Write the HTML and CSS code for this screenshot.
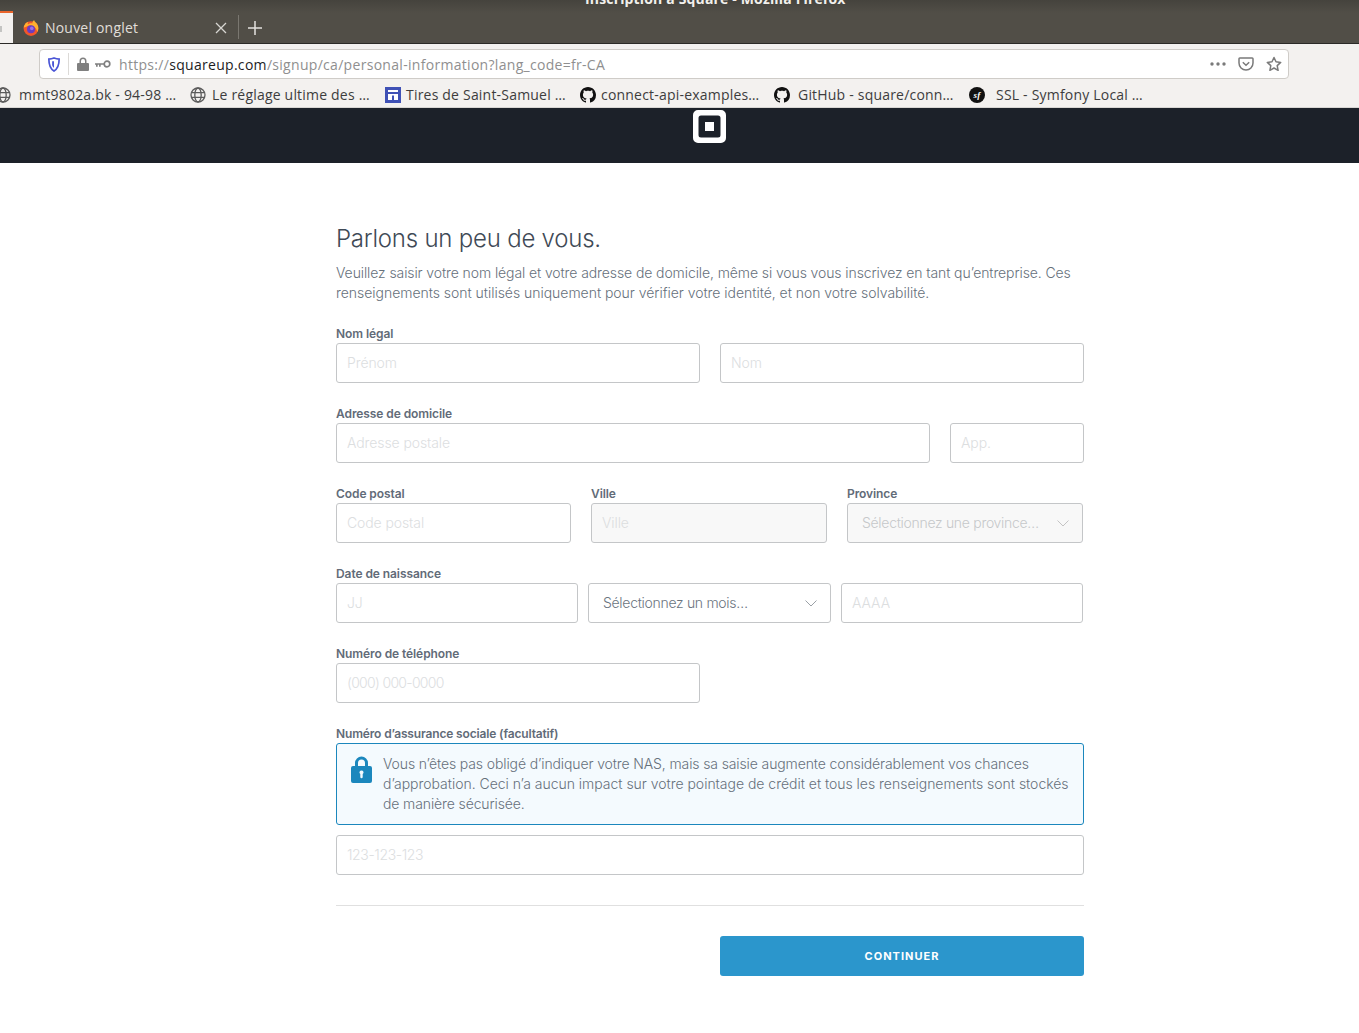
FILE: index.html
```html
<!DOCTYPE html>
<html lang="fr-CA">
<head>
<meta charset="utf-8">
<title>Inscription à Square - Mozilla Firefox</title>
<link rel="stylesheet" href="styles.css">
</head>
<body>
<div class="browser">
  <div class="tabstrip">
    <div class="wintitle">Inscription à Square - Mozilla Firefox</div>
    <div class="tab-stub"><span class="stub-x"></span></div>
    <div class="tab">
      <svg class="favicon" viewBox="0 0 16 16" width="16" height="16"><circle cx="8" cy="8.600" r="7.400" fill="#f2562b"/><path d="M.7 7.500C1.200 4.500 3 2.500 5.200 1.800 4.500 3 4.600 3.800 5 4.500 6 3.200 8 3 9.500 3.300 9.200 2 10 .8 11.200 0c0 1.300 1 2 2 3 1.300 1.300 2.100 3.200 2.100 5.200 0 1.300-.4 2.600-1.100 3.700-.4-3-2-5-5-6-2-.7-4-.4-5.500.6-1.200.6-2.200 1-3 1z" fill="#ffb02e"/><circle cx="8" cy="9.200" r="4" fill="#6a3cc2"/><circle cx="8.800" cy="8.400" r="1.800" fill="#9a74e6"/></svg>
      <span class="tab-label">Nouvel onglet</span>
      <svg class="tab-close" viewBox="0 0 12 12" width="12" height="12"><path d="M1 1l10 10M11 1L1 11" stroke="#d8d6d2" stroke-width="1.300" fill="none"/></svg>
    </div>
    <span class="tab-sep"></span>
    <svg class="tab-new" viewBox="0 0 14 14" width="14" height="14"><path d="M7 0v14M0 7h14" stroke="#e4e2df" stroke-width="1.500" fill="none"/></svg>
  </div>
  <div class="navbar">
    <div class="urlbar">
      <svg class="ico-shield" viewBox="0 0 14 16" width="14" height="15"><path d="M1.500 2.200C3.500 2 5.500 1.500 7 1c1.500.5 3.500 1 5.500 1.200 0 5.500-.8 10-5.500 12.800C2.300 12.200 1.500 7.700 1.500 2.200z" fill="#fff" stroke="#4a55d6" stroke-width="1.800"/><path d="M7 4.500h-2v3.500c0 1.500.9 2.800 2 3.500z" fill="#4a55d6"/></svg>
      <span class="url-sep"></span>
      <svg class="ico-lock" viewBox="0 0 12 14" width="12" height="14"><path d="M2.500 6V4a3.500 3.500 0 017 0v2h1.500a1 1 0 011 1v6a1 1 0 01-1 1H1a1 1 0 01-1-1V7a1 1 0 011-1zM4 6h4V4a2 2 0 00-4 0z" fill="#808080"/></svg>
      <svg class="ico-key" viewBox="0 0 16 8" width="16" height="8"><circle cx="12" cy="4" r="2.800" fill="none" stroke="#808080" stroke-width="1.700"/><path d="M9 3.200H0v1.600h1v2h1.700v-2h1.300v2h1.700v-2H9z" fill="#808080"/></svg>
      <div class="url"><span class="dim">https://</span><span class="host">squareup.com</span><span class="dim">/signup/ca/personal-information?lang_code=fr-CA</span></div>
      <svg class="ico-dots" viewBox="0 0 16 4" width="16" height="4"><circle cx="2" cy="2" r="1.700" fill="#7a7a7a"/><circle cx="8" cy="2" r="1.700" fill="#7a7a7a"/><circle cx="14" cy="2" r="1.700" fill="#7a7a7a"/></svg>
      <svg class="ico-pocket" viewBox="0 0 16 14" width="16" height="14"><path d="M1.800 1h12.400a.8.800 0 01.8.8V6a7 7 0 01-14 0V1.800a.8.800 0 01.8-.8z" fill="none" stroke="#7a7a7a" stroke-width="1.500"/><path d="M4.800 5.200L8 8.200l3.200-3" fill="none" stroke="#7a7a7a" stroke-width="1.500"/></svg>
      <svg class="ico-star" viewBox="0 0 16 16" width="16" height="16"><path d="M8 1.500l2 4.300 4.700.6-3.500 3.200.9 4.700L8 12l-4.100 2.300.9-4.700-3.500-3.200 4.700-.6z" fill="none" stroke="#7a7a7a" stroke-width="1.500" stroke-linejoin="round"/></svg>
    </div>
  </div>
  <div class="bookmarks">
    <div class="bm bm-1">
      <svg class="globe" viewBox="0 0 16 16" width="16" height="16"><g fill="none" stroke="#5c5c5c" stroke-width="1.300"><circle cx="8" cy="8" r="7"/><ellipse cx="8" cy="8" rx="3.200" ry="7"/><path d="M1.200 5.600h13.600M1.200 10.400h13.600"/></g></svg>
      <span class="bm-text">mmt9802a.bk - 94-98 …</span>
    </div>
    <div class="bm bm-2">
      <svg class="globe" viewBox="0 0 16 16" width="16" height="16"><g fill="none" stroke="#5c5c5c" stroke-width="1.300"><circle cx="8" cy="8" r="7"/><ellipse cx="8" cy="8" rx="3.200" ry="7"/><path d="M1.200 5.600h13.600M1.200 10.400h13.600"/></g></svg>
      <span class="bm-text">Le réglage ultime des …</span>
    </div>
    <div class="bm bm-3">
      <svg viewBox="0 0 16 16" width="16" height="16"><rect width="16" height="16" fill="#3f51b5"/><path d="M3 3h10v2H3zM3 7h10v1.500H3zM3 8.500h4V13H3zM9 8.500h4V13H9z" fill="#fff"/></svg>
      <span class="bm-text">Tires de Saint-Samuel …</span>
    </div>
    <div class="bm bm-4">
      <svg viewBox="0 0 16 16" width="16" height="16"><path fill="#111" d="M8 0C3.580 0 0 3.580 0 8c0 3.540 2.290 6.530 5.470 7.590.4.070.55-.17.55-.38 0-.19-.01-.82-.01-1.490-2.010.37-2.530-.49-2.690-.94-.09-.23-.48-.94-.82-1.130-.28-.15-.68-.52-.01-.53.63-.01 1.080.58 1.230.82.720 1.210 1.870.87 2.330.66.070-.52.280-.87.510-1.070-1.780-.2-3.640-.89-3.640-3.950 0-.87.310-1.590.820-2.150-.08-.2-.36-1.020.080-2.120 0 0 .67-.21 2.200.82.640-.18 1.320-.27 2-.27.680 0 1.360.090 2 .27 1.530-1.040 2.200-.82 2.200-.82.440 1.100.160 1.920.080 2.120.510.560.820 1.270.820 2.150 0 3.070-1.870 3.750-3.650 3.950.290.250.540.730.540 1.480 0 1.070-.01 1.930-.01 2.200 0 .210.150.460.550.380A8.013 8.013 0 0016 8c0-4.420-3.580-8-8-8z"/></svg>
      <span class="bm-text">connect-api-examples…</span>
    </div>
    <div class="bm bm-5">
      <svg viewBox="0 0 16 16" width="16" height="16"><path fill="#111" d="M8 0C3.580 0 0 3.580 0 8c0 3.540 2.290 6.530 5.470 7.590.4.070.55-.17.55-.38 0-.19-.01-.82-.01-1.490-2.010.37-2.530-.49-2.690-.94-.09-.23-.48-.94-.82-1.130-.28-.15-.68-.52-.01-.53.63-.01 1.080.58 1.230.82.720 1.210 1.870.87 2.330.66.070-.52.280-.87.510-1.070-1.780-.2-3.640-.89-3.640-3.950 0-.87.310-1.590.820-2.150-.08-.2-.36-1.020.080-2.120 0 0 .67-.21 2.200.82.640-.18 1.320-.27 2-.27.680 0 1.360.090 2 .27 1.530-1.040 2.200-.82 2.200-.82.440 1.100.160 1.920.080 2.120.510.560.820 1.270.820 2.150 0 3.070-1.870 3.750-3.650 3.950.290.250.540.730.540 1.480 0 1.070-.01 1.930-.01 2.200 0 .210.150.460.550.380A8.013 8.013 0 0016 8c0-4.420-3.580-8-8-8z"/></svg>
      <span class="bm-text">GitHub - square/conn…</span>
    </div>
    <div class="bm bm-6">
      <span class="sf">sf</span>
      <span class="bm-text">SSL - Symfony Local …</span>
    </div>
  </div>
</div>
<header class="site-header">
  <svg class="logo" viewBox="0 0 33 33" width="33" height="33"><path fill="#fff" fill-rule="evenodd" d="M5 0h23a5 5 0 015 5v23a5 5 0 01-5 5H5a5 5 0 01-5-5V5a5 5 0 015-5zM8 5.500A2.500 2.500 0 005.500 8v17A2.500 2.500 0 008 27.500h17a2.500 2.500 0 002.500-2.500V8A2.500 2.500 0 0025 5.500zM12 12h9v9h-9z"/></svg>
</header>
<main class="page">
  <h1 class="title">Parlons un peu de vous.</h1>
  <p class="intro">Veuillez saisir votre nom légal et votre adresse de domicile, même si vous vous inscrivez en tant qu’entreprise. Ces <span class="wide">renseignements sont utilisés uniquement pour vérifier votre identité, et non votre solvabilité.</span></p>
  <form class="form">
    <section class="group">
      <label class="lbl">Nom légal</label>
      <div class="row row-name">
        <input class="field" placeholder="Prénom">
        <input class="field" placeholder="Nom">
      </div>
    </section>
    <section class="group">
      <label class="lbl">Adresse de domicile</label>
      <div class="row row-address">
        <input class="field" placeholder="Adresse postale">
        <input class="field" placeholder="App.">
      </div>
    </section>
    <section class="group row-city">
      <div class="col">
        <label class="lbl">Code postal</label>
        <input class="field" placeholder="Code postal">
      </div>
      <div class="col">
        <label class="lbl">Ville</label>
        <input class="field field-off" placeholder="Ville">
      </div>
      <div class="col">
        <label class="lbl">Province</label>
        <div class="select select-off"><span>Sélectionnez une province…</span><svg viewBox="0 0 12 7" width="12" height="7"><path d="M.5.500L6 6l5.500-5.500" fill="none" stroke="#c4c4c4" stroke-width="1"/></svg></div>
      </div>
    </section>
    <section class="group">
      <label class="lbl">Date de naissance</label>
      <div class="row row-date">
        <input class="field" placeholder="JJ">
        <div class="select"><span>Sélectionnez un mois…</span><svg viewBox="0 0 12 7" width="12" height="7"><path d="M.5.500L6 6l5.500-5.500" fill="none" stroke="#9aa0a6" stroke-width="1"/></svg></div>
        <input class="field" placeholder="AAAA">
      </div>
    </section>
    <section class="group">
      <label class="lbl">Numéro de téléphone</label>
      <div class="row row-name">
        <input class="field field-num" placeholder="(000) 000-0000">
      </div>
    </section>
    <section class="group group-sin">
      <label class="lbl lbl-sin">Numéro d’assurance sociale (facultatif)</label>
      <div class="notice">
        <svg class="notice-ico" viewBox="0 0 21 27" width="21" height="27"><path fill="#1b87bd" fill-rule="evenodd" d="M4 10V7a6.500 6.500 0 0113 0v3h2a2 2 0 012 2v13a2 2 0 01-2 2H2a2 2 0 01-2-2V12a2 2 0 012-2zM7 10h7V7a3.500 3.500 0 00-7 0zM10.500 14.500a2 2 0 00-1.200 3.600V21a1.200 1.200 0 002.400 0v-2.900a2 2 0 00-1.200-3.600z"/></svg>
        <p>Vous n’êtes pas obligé d’indiquer votre NAS, mais sa saisie augmente considérablement vos chances <span class="wider">d’approbation. Ceci n’a aucun impact sur votre pointage de crédit et tous les renseignements sont stockés</span> de manière sécurisée.</p>
      </div>
      <input class="field field-sin" placeholder="123-123-123">
    </section>
    <hr class="rule">
    <div class="actions">
      <span></span>
      <button class="cta" type="button">CONTINUER</button>
    </div>
  </form>
</main>
</body>
</html>
```

FILE: styles.css
```css
* { box-sizing: border-box; }
html, body { margin: 0; padding: 0; background: #fff; }
body { font-family: Inter, "Liberation Sans", sans-serif; overflow: hidden; height: 1033px; }

.browser { font-family: "Open Sans", "Noto Sans", sans-serif; }

.tabstrip {
  position: relative;
  height: 44px;
  display: flex;
  align-items: flex-end;
  background: linear-gradient(#45433d, #514e47 30%, #514e47);
  border-bottom: 1px solid #2b2a27;
  overflow: hidden;
}
.wintitle {
  position: absolute;
  top: -10px;
  left: 585px;
  font-size: 14px;
  line-height: 18px;
  font-weight: 700;
  letter-spacing: .16px;
  color: #f2f0ec;
  white-space: nowrap;
}
.tab-stub {
  position: relative;
  width: 13px;
  height: 32px;
  background: #f3f1ef;
  border-top: 2px solid #e9642a;
}
.stub-x {
  position: absolute;
  left: 0;
  top: 13px;
  width: 2px;
  height: 6px;
  background: #c4c4c2;
}
.tab {
  width: 225px;
  height: 31px;
  display: flex;
  align-items: center;
  padding-left: 10px;
  color: #e0ded9;
  font-size: 14px;
}
.favicon { flex: none; }
.tab-label { margin-left: 6px; flex: 1; letter-spacing: .2px; }
.tab-close { margin-right: 11px; }
.tab-sep { width: 1px; height: 24px; margin-bottom: 4px; background: #7a7770; }
.tab-new { margin: 0 0 8px 9px; }

.navbar {
  height: 42px;
  background: #f3f1ef;
  padding: 5px 70px 7px 39px;
}
.urlbar {
  height: 30px;
  background: #fff;
  border: 1px solid #cfccc8;
  border-radius: 4px;
  display: flex;
  align-items: center;
  padding-left: 7px;
  padding-right: 6px;
}
.ico-shield { flex: none; }
.url-sep { width: 1px; height: 22px; background: #dcdad7; margin: 0 8px 0 7px; }
.ico-lock { flex: none; }
.ico-key { flex: none; margin-left: 6px; }
.url { flex: 1; margin-left: 8px; font-size: 14px; white-space: nowrap; letter-spacing: .3px; }
.dim { color: #8f8f8f; }
.host { color: #1d1d1f; }
.ico-dots { margin-right: 12px; }
.ico-pocket { margin-right: 12px; }

.bookmarks {
  height: 22px;
  background: #f3f1ef;
  border-bottom: 1px solid #d8d6d3;
  display: flex;
  align-items: center;
  padding-bottom: 3px;
  color: #3d3d3d;
  font-size: 14px;
  letter-spacing: .2px;
  white-space: nowrap;
  overflow: hidden;
}
.bm { display: flex; align-items: center; gap: 5px; flex: none; }
.bm-text { margin-bottom: 2px; }
.bm-1 { margin-left: -5px; width: 195px; gap: 8px; }
.bm-2 { width: 195px; gap: 6px; }
.bm-3 { width: 195px; }
.bm-4 { width: 194px; }
.bm-5 { width: 195px; gap: 8px; }
.bm-6 { gap: 11px; }
.sf {
  width: 16px;
  height: 16px;
  border-radius: 50%;
  background: #111;
  color: #fff;
  font: italic 700 9px/16px "Liberation Serif", serif;
  text-align: center;
}

.site-header {
  height: 55px;
  background: #1c2129;
  display: flex;
  justify-content: center;
  align-items: flex-start;
  padding-left: 59px;
  padding-top: 2px;
}

.page { width: 748px; margin-left: 336px; padding-top: 59px; }
.title {
  margin: 0;
  font-size: 24px;
  line-height: 34px;
  font-weight: 300;
  letter-spacing: -.22px;
  color: #3f4a56;
}
.intro {
  margin: 7px 0 0;
  font-size: 14px;
  line-height: 20px;
  font-weight: 300;
  letter-spacing: -.1px;
  color: #66707b;
}
.wide { letter-spacing: -.03px; }
.wider { letter-spacing: -.02px; }
.form { margin-top: 20px; }
.group { margin-bottom: 20px; }
.lbl {
  display: block;
  height: 20px;
  font-size: 12px;
  line-height: 22px;
  font-weight: 600;
  letter-spacing: -.08px;
  color: #626b78;
}
.lbl-sin { letter-spacing: -.15px; }
.row { display: grid; }
.row-name { grid-template-columns: 364px 364px; column-gap: 20px; }
.row-address { grid-template-columns: 594px 134px; column-gap: 20px; }
.row-city { display: grid; grid-template-columns: 235px 236px 236px; column-gap: 20px; }
.row-date { grid-template-columns: 242px 243px 242px; column-gap: 10px; }

.field, .select {
  display: block;
  width: 100%;
  height: 40px;
  border: 1px solid #c4c6c8;
  border-radius: 3px;
  background: #fff;
  font: 300 14px Inter, "Liberation Sans", sans-serif;
  letter-spacing: -.1px;
  padding: 0 10px 2px;
  outline: none;
}
.field::placeholder { color: #dcdedf; opacity: 1; }
.field-off { background: #f8f8f8; }
.field-off::placeholder { color: #dcdedf; }
.field-num { letter-spacing: -.7px; }
.field-sin { letter-spacing: -.4px; }
.select {
  display: flex;
  align-items: center;
  justify-content: space-between;
  padding: 0 13px 2px 14px;
  letter-spacing: -.3px;
  color: #6b7480;
}
.select svg { margin-top: 2px; }
.select-off { background: #f8f8f8; color: #c6c8ca; }

.notice {
  height: 82px;
  background: #f4fafe;
  border: 1px solid #1b87bd;
  border-radius: 3px;
  display: flex;
  align-items: flex-start;
  padding: 10px 8px 0 14px;
  margin-bottom: 10px;
}
.notice-ico { flex: none; margin: 2px 11px 0 0; }
.notice p {
  margin: 0;
  font-size: 14px;
  line-height: 20px;
  font-weight: 300;
  letter-spacing: -.12px;
  color: #66707b;
}
.group-sin { margin-bottom: 30px; }
.rule { margin: 0 0 30px; border: 0; border-top: 1px solid #e0e0e0; }
.actions { display: grid; grid-template-columns: 364px 364px; column-gap: 20px; }
.cta {
  height: 40px;
  border: 0;
  border-radius: 3px;
  background: #2b96cc;
  color: #fff;
  font: 700 11px Inter, "Liberation Sans", sans-serif;
  letter-spacing: 1px;
}
```
